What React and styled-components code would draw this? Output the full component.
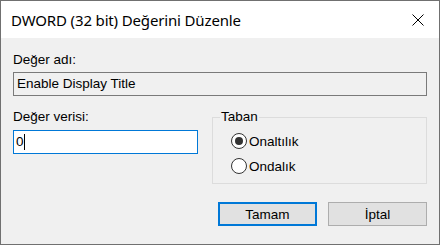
import React from 'react';
import styled, { createGlobalStyle } from 'styled-components';

const GlobalStyle = createGlobalStyle`
    html, body {
        margin:0;
        padding:0;
        background:#ffffff;
    }
    *{
        box-sizing:border-box;
    }
`

const Window = styled.div`
    width:440px;
    height:245px;
    border:1px solid #707070;
    display:flex;
    flex-direction:column;
    font-family:"Liberation Sans", Arial, sans-serif;
    font-size:13.5px;
    color:#000;
`

const TitleBar = styled.div`
    height:37px;
    background:#fff;
    display:flex;
    align-items:center;
    justify-content:space-between;
    padding-left:10px;

    .title{
        font-family:"Noto Sans", "Open Sans", sans-serif;
        font-size:15px;
        color:#000;
        letter-spacing:-0.15px;
    }
`

const CloseButton = styled.div`
    width:42px;
    height:37px;
    display:flex;
    align-items:center;
    justify-content:center;
`

const Body = styled.div`
    flex:1;
    background:#f0f0f0;
    padding:14px 12px 0 12px;
    display:flex;
    flex-direction:column;
`

const Label = styled.div`
    line-height:16px;
    height:16px;
    margin-bottom:${p => p.$gap || 4}px;
`

const ReadOnlyBox = styled.div`
    height:24px;
    border:1px solid #7a7a7a;
    background:#f0f0f0;
    padding-left:3px;
    line-height:22px;
`

const Row = styled.div`
    display:grid;
    grid-template-columns:185px 215px;
    column-gap:14px;
    margin-top:13px;
`

const ValueBox = styled.div`
    height:24px;
    border:1px solid #0078d7;
    background:#fff;
    padding-left:2px;
    line-height:22px;
    display:flex;
    align-items:center;
`

const Caret = styled.span`
    display:inline-block;
    width:1px;
    height:16px;
    background:#000;
`

const GroupBox = styled.fieldset`
    margin:0;
    padding:0 0 9px 0;
    border:1px solid #dcdcdc;
    min-width:0;
    display:flex;
    flex-direction:column;
    gap:9px;

    legend{
        margin-left:7px;
        padding:0 1px;
        line-height:16px;
        height:16px;
        margin-bottom:8px;
    }
`

const RadioRow = styled.label`
    display:flex;
    align-items:center;
    height:16px;
    gap:2px;
    padding-left:18px;
`

const RadioCircle = styled.span`
    width:16px;
    height:16px;
    border-radius:50%;
    border:1px solid #333;
    background:#fff;
    display:flex;
    align-items:center;
    justify-content:center;

    &::after{
        content:'';
        width:8px;
        height:8px;
        border-radius:50%;
        background:${p => p.$checked ? '#333' : 'transparent'};
    }
`

const Buttons = styled.div`
    display:flex;
    justify-content:flex-end;
    gap:11px;
    margin-top:18px;
`

const Button = styled.div`
    width:99px;
    height:24px;
    background:#e1e1e1;
    border:${p => p.$primary ? '2px solid #0078d7' : '1px solid #adadad'};
    display:flex;
    align-items:center;
    justify-content:center;
`

const Radio = ({checked, children}) => (
    <RadioRow>
        <RadioCircle $checked={checked}/>
        <span>{children}</span>
    </RadioRow>
)

const App = () => {
    return (
        <>
            <GlobalStyle/>
            <Window>
                <TitleBar>
                    <span className="title">DWORD (32 bit) Değerini Düzenle</span>
                    <CloseButton>
                        <svg width="12" height="12" viewBox="0 0 12 12">
                            <path d="M0.5 0.5 L11.5 11.5 M11.5 0.5 L0.5 11.5" stroke="#000" strokeWidth="1" fill="none"/>
                        </svg>
                    </CloseButton>
                </TitleBar>
                <Body>
                    <Label>Değer adı:</Label>
                    <ReadOnlyBox>Enable Display Title</ReadOnlyBox>
                    <Row>
                        <div>
                            <Label $gap={5}>Değer verisi:</Label>
                            <ValueBox>0<Caret/></ValueBox>
                        </div>
                        <GroupBox>
                            <legend>Taban</legend>
                            <Radio checked>Onaltılık</Radio>
                            <Radio>Ondalık</Radio>
                        </GroupBox>
                    </Row>
                    <Buttons>
                        <Button $primary>Tamam</Button>
                        <Button>İptal</Button>
                    </Buttons>
                </Body>
            </Window>
        </>
    )
}

export default App
